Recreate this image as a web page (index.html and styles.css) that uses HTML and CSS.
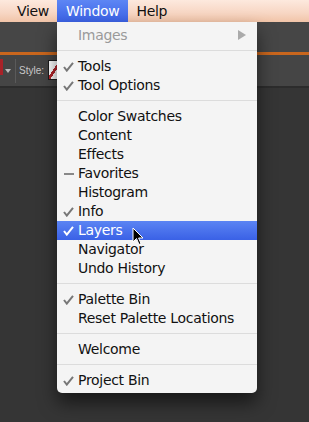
FILE: index.html
```html
<!DOCTYPE html>
<html lang="en">
<head>
  <meta charset="UTF-8">
  <title>Window Menu</title>
  <link rel="stylesheet" href="styles.css">
</head>
<body>
  <div class="menubar">
    <span class="menu-title">View</span>
    <span class="menu-title active">Window</span>
    <span class="menu-title">Help</span>
  </div>

  <div class="workspace">
    <div class="panel-top"></div>
    <div class="options-bar">
      <span class="color-chip"></span>
      <span class="chip-arrow"></span>
      <span class="divider"></span>
      <span class="style-label">Style:</span>
      <span class="style-swatch"></span>
    </div>
    <div class="canvas-area"></div>
  </div>

  <div class="dropdown">
    <div class="item disabled">Images<span class="submenu-arrow"></span></div>
    <div class="sep"></div>
    <div class="item"><svg class="mark" viewBox="0 0 11 10"><path d="M1 5 L3.8 8.6 L10 0.8"/></svg>Tools</div>
    <div class="item"><svg class="mark" viewBox="0 0 11 10"><path d="M1 5 L3.8 8.6 L10 0.8"/></svg>Tool Options</div>
    <div class="sep"></div>
    <div class="item">Color Swatches</div>
    <div class="item">Content</div>
    <div class="item">Effects</div>
    <div class="item"><span class="dash"></span>Favorites</div>
    <div class="item">Histogram</div>
    <div class="item"><svg class="mark" viewBox="0 0 11 10"><path d="M1 5 L3.8 8.6 L10 0.8"/></svg>Info</div>
    <div class="item selected"><svg class="mark" viewBox="0 0 11 10"><path d="M1 5 L3.8 8.6 L10 0.8"/></svg>Layers</div>
    <div class="item">Navigator</div>
    <div class="item">Undo History</div>
    <div class="sep"></div>
    <div class="item"><svg class="mark" viewBox="0 0 11 10"><path d="M1 5 L3.8 8.6 L10 0.8"/></svg>Palette Bin</div>
    <div class="item">Reset Palette Locations</div>
    <div class="sep"></div>
    <div class="item">Welcome</div>
    <div class="sep"></div>
    <div class="item"><svg class="mark" viewBox="0 0 11 10"><path d="M1 5 L3.8 8.6 L10 0.8"/></svg>Project Bin</div>
  </div>

  <svg class="cursor" width="12" height="19" viewBox="0 0 12 19">
    <path d="M1 1 L1 15 L4.5 11.5 L7 17.5 L9 16.6 L6.6 11 L11 11 Z" fill="#000" stroke="#fff" stroke-width="1"/>
  </svg>
</body>
</html>
```

FILE: styles.css
```css
* {
  margin: 0;
  padding: 0;
  box-sizing: border-box;
}

body {
  width: 309px;
  height: 422px;
  overflow: hidden;
  position: relative;
  background-color: #333;
  font-family: 'DejaVu Sans', 'Liberation Sans', sans-serif;
}

.menubar {
  height: 22px;
  display: flex;
  align-items: center;
  padding-left: 9px;
  background: linear-gradient(#fde9de, #f7d6c3 60%, #f1c4a8);
  font-size: 14px;
  letter-spacing: -0.3px;
  color: #111;
}

.menu-title {
  height: 22px;
  line-height: 22px;
  padding: 0 8px;
}

.menu-title.active {
  background: linear-gradient(#5d86f4, #3b62e6);
  color: #fff;
  padding: 0 9px;
}

.workspace {
  display: flex;
  flex-direction: column;
}

.panel-top {
  height: 33px;
  background-color: #464646;
  border-bottom: 3px solid #c9661d;
}

.options-bar {
  height: 33px;
  display: flex;
  align-items: center;
  background-color: #454545;
  border-bottom: 2px solid #2c2c2c;
}

.color-chip {
  width: 3px;
  height: 16px;
  margin-top: -8px;
  background-color: #a82228;
}

.chip-arrow {
  width: 0;
  height: 0;
  margin-left: 2px;
  border-left: 3px solid transparent;
  border-right: 3px solid transparent;
  border-top: 4px solid #bbb;
}

.divider {
  width: 1px;
  height: 24px;
  margin-left: 4px;
  background-color: #5a5a5a;
}

.style-label {
  margin-left: 3px;
  font-family: 'Liberation Sans', sans-serif;
  font-size: 10px;
  color: #c8c8c8;
}

.style-swatch {
  width: 14px;
  height: 20px;
  margin-left: 4px;
  margin-top: -2px;
  background: #fff linear-gradient(to bottom right, transparent 42%, #b3242a 42%, #b3242a 56%, transparent 56%);
  border: 1px solid #1c1c1c;
}

.canvas-area {
  height: 336px;
  background-color: #353535;
}

.dropdown {
  position: absolute;
  left: 57px;
  top: 22px;
  width: 200px;
  padding: 4px 0 3px;
  background-color: #f4f4f4;
  border-radius: 0 0 5px 5px;
  box-shadow: 0 10px 18px rgba(0, 0, 0, 0.55);
  font-size: 14px;
  letter-spacing: -0.3px;
  color: #111;
}

.item {
  position: relative;
  height: 19px;
  line-height: 19px;
  padding-left: 21px;
  white-space: nowrap;
}

.item.disabled {
  color: #9a9a9a;
}

.item.selected {
  background: linear-gradient(#5b84f3, #3a61e6);
  color: #fff;
}

.mark {
  position: absolute;
  left: 6px;
  top: 5px;
  width: 11px;
  height: 10px;
  fill: none;
  stroke: #777;
  stroke-width: 2;
}

.item.selected .mark {
  stroke: #fff;
}

.dash {
  position: absolute;
  top: 9px;
  left: 7px;
  width: 10px;
  height: 2px;
  background-color: #888;
}

.submenu-arrow {
  position: absolute;
  right: 11px;
  top: 4px;
  width: 0;
  height: 0;
  border-top: 5px solid transparent;
  border-bottom: 5px solid transparent;
  border-left: 8px solid #aaa;
}

.sep {
  height: 12px;
  position: relative;
}

.sep::after {
  content: "";
  position: absolute;
  left: 0;
  right: 0;
  top: 5px;
  height: 1px;
  background-color: #dcdcdc;
}

.cursor {
  position: absolute;
  left: 132px;
  top: 227px;
}
```
